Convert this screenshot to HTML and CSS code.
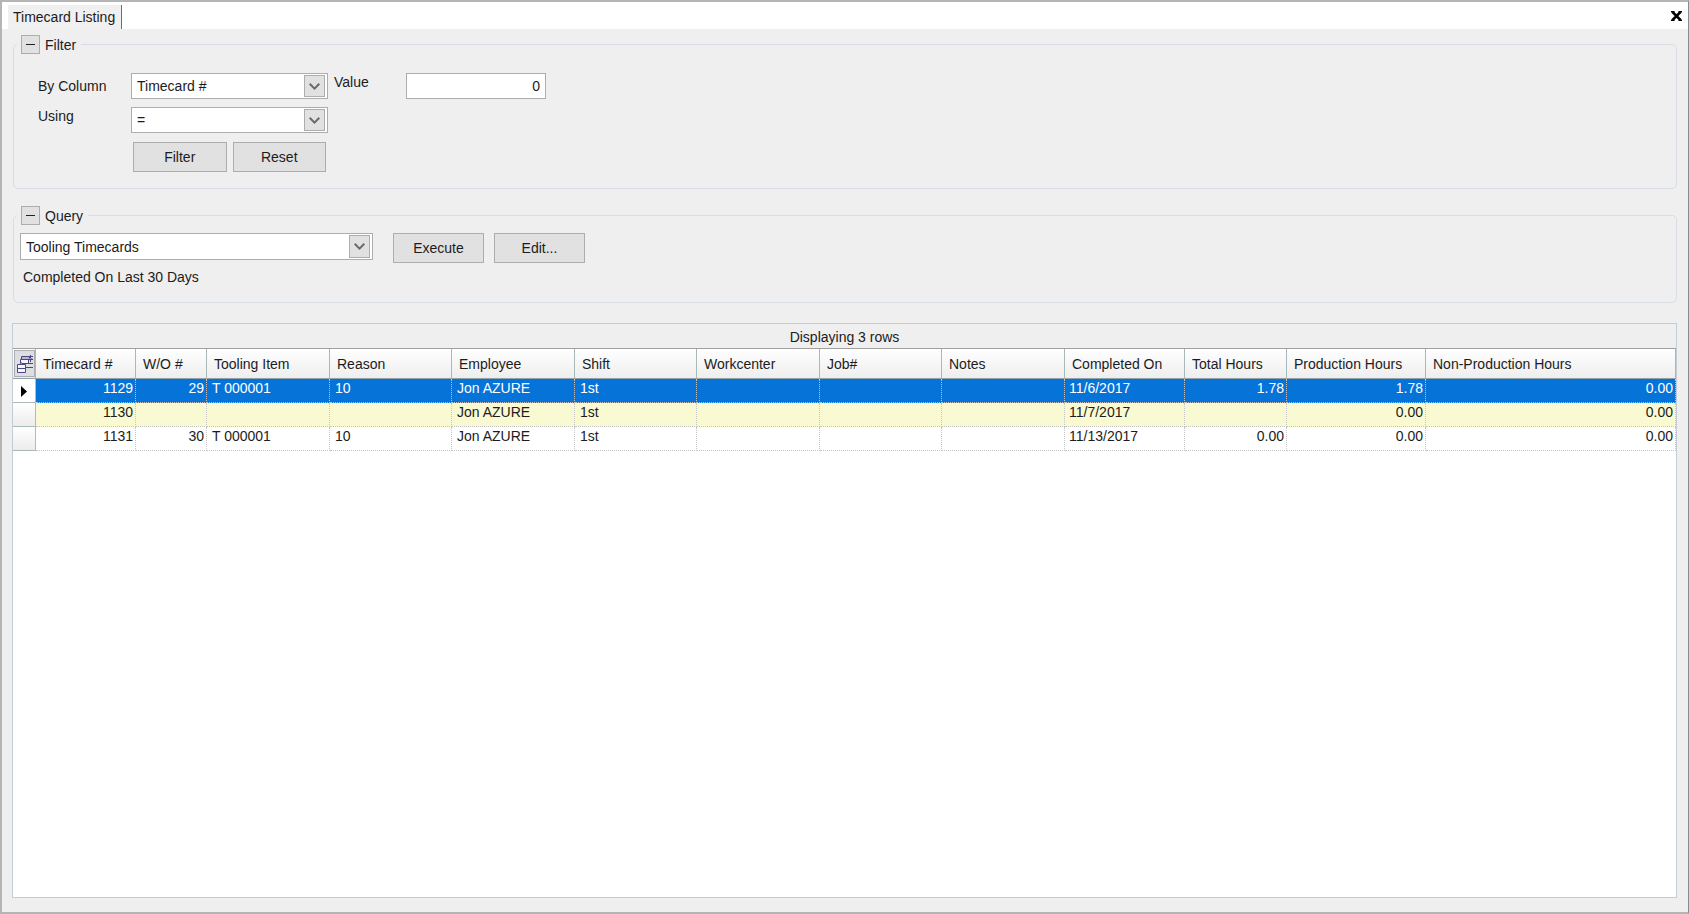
FILE: index.html
```html
<!DOCTYPE html>
<html lang="en">
<head>
<meta charset="utf-8">
<title>Timecard Listing</title>
<link rel="stylesheet" href="styles.css">
</head>
<body>
<div class="window">
  <header class="tabs">
    <span class="tab">Timecard Listing</span>
    <button class="close" type="button" aria-label="Close">
      <svg width="11" height="10" viewBox="0 0 11 10" fill="none" stroke="#000" stroke-width="2.500"><path d="M1.500 1 9.500 9M9.500 1 1.500 9"/><path stroke-width="1.500" d="M0 .75h3.500M7.500.75H11M0 9.250h3.500M7.500 9.250H11"/></svg>
    </button>
  </header>

  <main class="content">
    <fieldset class="group">
      <legend class="legend"><button class="toggle" type="button" aria-label="Collapse Filter"></button>Filter</legend>
      <div class="filter">
        <label class="lbl mid" for="col">By Column</label>
        <div class="combo">
          <select id="col"><option>Timecard #</option></select>
          <span class="drop"><svg width="11" height="7" viewBox="0 0 11 7"><path d="M.7.8 5.500 5.600 10.300.8"/></svg></span>
        </div>
        <label class="lbl" for="val">Value</label>
        <input class="value" id="val" type="text" value="0">
        <label class="lbl" for="op">Using</label>
        <div class="combo">
          <select id="op"><option>=</option></select>
          <span class="drop"><svg width="11" height="7" viewBox="0 0 11 7"><path d="M.7.8 5.500 5.600 10.300.8"/></svg></span>
        </div>
        <div class="actions">
          <button class="btn" type="button">Filter</button>
          <button class="btn" type="button">Reset</button>
        </div>
      </div>
    </fieldset>

    <fieldset class="group query-group">
      <legend class="legend"><button class="toggle" type="button" aria-label="Collapse Query"></button>Query</legend>
      <div class="query">
        <div class="combo wide">
          <select aria-label="Query"><option>Tooling Timecards</option></select>
          <span class="drop"><svg width="11" height="7" viewBox="0 0 11 7"><path d="M.7.8 5.500 5.600 10.300.8"/></svg></span>
        </div>
        <button class="btn" type="button">Execute</button>
        <button class="btn" type="button">Edit...</button>
      </div>
      <p class="summary">Completed On Last 30 Days</p>
    </fieldset>

    <section class="grid">
      <table class="table">
        <caption>Displaying 3 rows</caption>
        <colgroup>
          <col class="c-mark"><col class="c-card"><col class="c-wo"><col class="c-wide"><col class="c-std"><col class="c-wide"><col class="c-std"><col class="c-wide"><col class="c-std"><col class="c-wide"><col class="c-done"><col class="c-total"><col class="c-prod"><col>
        </colgroup>
        <thead>
          <tr>
            <th class="corner">
              <button class="chooser" type="button" aria-label="Choose columns">
                <svg width="18" height="20" viewBox="0 0 18 20" fill="none" stroke="#4a4884">
                  <path fill="#b9b7d6" d="M5.500 2.500h8v3h-8z"/>
                  <path fill="#f6f6fc" d="M4.500 5.500h8v4h-8z"/>
                  <path fill="#f6f6fc" d="M1.500 10.500h8v4h-8zM1.500 14.500h8v4h-8z"/>
                  <path d="M12 2.500h5M14.500 1v7M12 5.500h5M9 9.500h8M9 13.500h8"/>
                  <path stroke="#8d8bb8" d="M12.500 4.500h4M5.500 8v2"/>
                </svg>
              </button>
            </th>
            <th>Timecard #</th><th>W/O #</th><th>Tooling Item</th><th>Reason</th><th>Employee</th><th>Shift</th><th>Workcenter</th><th>Job#</th><th>Notes</th><th>Completed On</th><th>Total Hours</th><th>Production Hours</th><th>Non-Production Hours</th>
          </tr>
        </thead>
        <tbody>
          <tr class="selected">
            <td class="mark current"><svg width="6" height="11" viewBox="0 0 6 11"><path d="M0 0 6 5.500 0 11z"/></svg></td>
            <td class="num">1129</td><td class="num">29</td><td>T 000001</td><td>10</td><td>Jon AZURE</td><td>1st</td><td></td><td></td><td></td><td class="date">11/6/2017</td><td class="num">1.78</td><td class="num">1.78</td><td class="num">0.00</td>
          </tr>
          <tr class="alt">
            <td class="mark"></td>
            <td class="num">1130</td><td class="num"></td><td></td><td></td><td>Jon AZURE</td><td>1st</td><td></td><td></td><td></td><td class="date">11/7/2017</td><td class="num"></td><td class="num">0.00</td><td class="num">0.00</td>
          </tr>
          <tr>
            <td class="mark"></td>
            <td class="num">1131</td><td class="num">30</td><td>T 000001</td><td>10</td><td>Jon AZURE</td><td>1st</td><td></td><td></td><td></td><td class="date">11/13/2017</td><td class="num">0.00</td><td class="num">0.00</td><td class="num">0.00</td>
          </tr>
        </tbody>
      </table>
    </section>
  </main>
</div>
</body>
</html>
```

FILE: styles.css
```css
* { box-sizing: border-box; }

body {
  margin: 0;
  font: 14px/16px "Liberation Sans", Arial, sans-serif;
  color: #1c1c1c;
}

button, select, input { font: inherit; color: inherit; }

.window {
  display: flex;
  flex-direction: column;
  min-height: 100vh;
  background: #efefef;
  border: 2px solid #b4b4b4;
  border-right: 1px solid #8c8c8c;
}

/* Tab strip */
.tabs {
  display: flex;
  justify-content: space-between;
  align-items: flex-end;
  height: 27px;
  padding: 0 6px;
  background: #fff;
}

.tab {
  height: 24px;
  padding: 4px 6px 4px 5px;
  background: #f0f0f0;
  border-right: 1px solid #6e6e6e;
}

.close {
  align-self: center;
  display: flex;
  padding: 0;
  border: 0;
  background: none;
}

.content {
  flex: 1;
  display: flex;
  flex-direction: column;
  padding: 6px 11px 14px 10px;
}

/* Group boxes */
.group {
  min-width: 0;
  margin: 0 0 0 1px;
  padding: 0 6px;
  border: 1px solid #d8dde3;
  border-radius: 5px;
}

.legend {
  display: flex;
  align-items: center;
  gap: 5px;
  margin-left: -3px;
  padding: 0 5px 0 4px;
}

.toggle {
  display: flex;
  align-items: center;
  justify-content: center;
  width: 19px;
  height: 19px;
  padding: 0;
  background: #e1e1e1;
  border: 1px solid #adadad;
}

.toggle::before {
  content: "";
  width: 9px;
  height: 1px;
  background: #222;
}

.filter {
  display: grid;
  grid-template-columns: 93px 197px 78px 140px;
  gap: 8px 0;
  padding: 19px 0 16px 18px;
}

.lbl { padding-top: 1px; }
.lbl.mid { align-self: center; padding: 0; }
.lbl[for="val"] { padding-left: 6px; }
.filter .lbl[for="op"] { grid-column: 1; }

.combo {
  position: relative;
  height: 26px;
}

.combo select {
  display: block;
  width: 100%;
  height: 100%;
  padding: 0 28px 0 5px;
  appearance: none;
  background: #fff;
  border: 1px solid #adadad;
  border-radius: 0;
}

.drop {
  position: absolute;
  top: 2px;
  right: 3px;
  bottom: 2px;
  display: flex;
  align-items: center;
  justify-content: center;
  width: 21px;
  background: #e1e1e1;
  border: 1px solid #adadad;
  pointer-events: none;
}

.drop path {
  fill: none;
  stroke: #6a6a6a;
  stroke-width: 2;
}

.value {
  width: 100%;
  height: 26px;
  padding: 0 5px;
  text-align: right;
  background: #fff;
  border: 1px solid #adadad;
}

.actions {
  grid-column: 2;
  display: flex;
  gap: 6px;
  padding: 1px 2px 0;
}

.btn {
  flex: 1;
  height: 30px;
  padding: 0;
  background: #e1e1e1;
  border: 1px solid #adadad;
}

.query-group { margin-top: 17px; }

.query {
  display: flex;
  gap: 10px;
  padding-top: 8px;
}

.query .btn { flex: 0 0 91px; }

.combo.wide {
  width: 353px;
  height: 27px;
  margin-right: 10px;
}

.summary {
  margin: 0;
  padding: 6px 0 17px 3px;
}

/* Results grid */
.grid {
  flex: 1;
  margin-top: 20px;
  background: #fff;
  border: 1px solid #c3ccd6;
}

.table {
  width: 100%;
  table-layout: fixed;
  border-collapse: separate;
  border-spacing: 0;
}

.table caption {
  height: 25px;
  padding-top: 5px;
  background: #efefef;
  border-bottom: 1px solid #a0a0a0;
}

.c-mark { width: 23px; }
.c-card { width: 100px; }
.c-wo { width: 71px; }
.c-std { width: 122px; }
.c-wide { width: 123px; }
.c-done { width: 120px; }
.c-total { width: 102px; }
.c-prod { width: 139px; }

.table th {
  height: 30px;
  padding: 0 0 0 7px;
  text-align: left;
  font-weight: normal;
  white-space: nowrap;
  background: linear-gradient(#fff, #eee);
  border-right: 1px solid #a9b8b8;
  border-bottom: 1px solid #8fa3a8;
}

.table .corner { padding: 0; }

.chooser {
  display: flex;
  align-items: center;
  justify-content: center;
  width: 21px;
  height: 27px;
  margin-left: 1px;
  padding: 0;
  background: #dedee2;
  border: 1px solid #adadb2;
}

.table td {
  height: 24px;
  padding: 1px 0 0 5px;
  vertical-align: top;
  white-space: nowrap;
  border-right: 1px dotted #c4c4c4;
  border-bottom: 1px dotted #c4c4c4;
}

.table .num { padding: 1px 2px 0 0; text-align: right; }
.table .date { padding-left: 4px; }

.table .mark {
  padding: 0;
  background: linear-gradient(#fff, #ececec);
  border-right: 1px solid #b0bcbc;
  border-bottom: 1px solid #a9b8b8;
}

.table .current {
  padding: 7px 0 0 8px;
  background: #fff;
}

.current svg { display: block; }

.selected td { color: #fff; background: #0573d8; }
.alt td { background: #fafad2; }
```
